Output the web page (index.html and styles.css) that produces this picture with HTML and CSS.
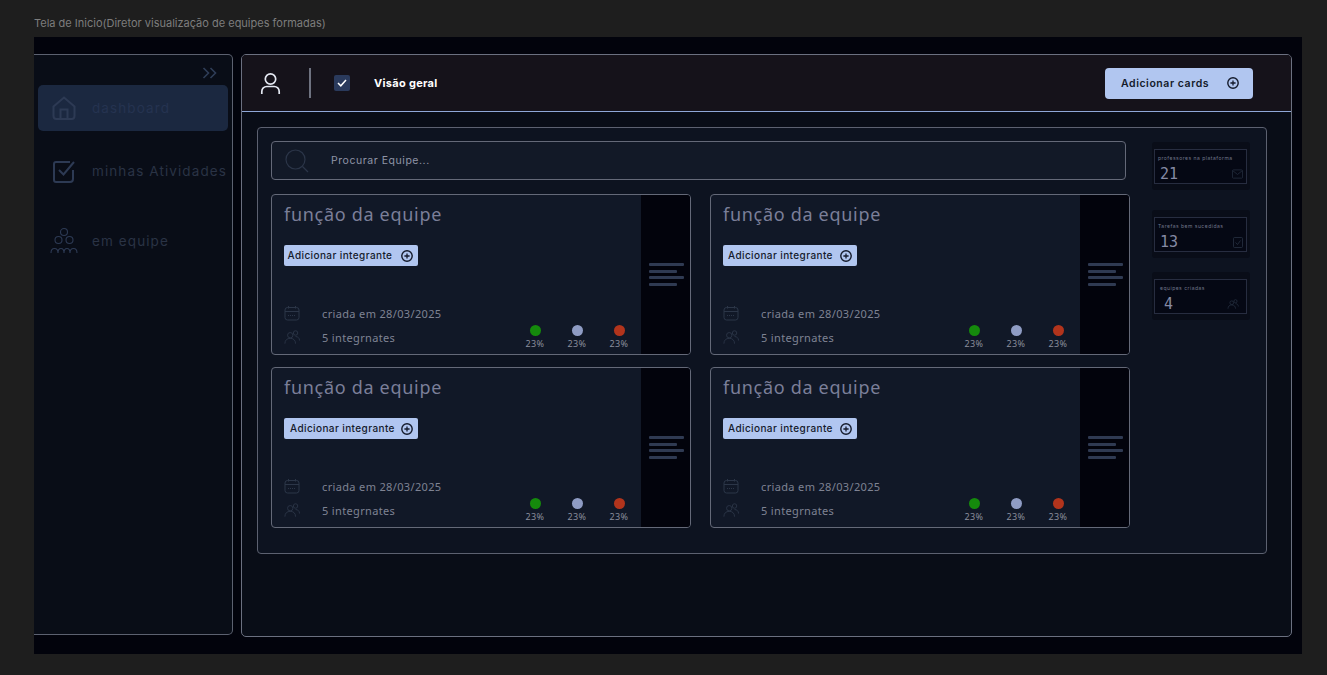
FILE: index.html
```html
<!DOCTYPE html>
<html lang="en">
<head>
    <meta charset="UTF-8">
    <meta name="viewport" content="width=device-width, initial-scale=1.0">
    <title>Tela de Inicio</title>
    <link rel="stylesheet" href="styles.css">
</head>
<body>
    <svg class="defs" width="0" height="0">
        <symbol id="i-plus" viewBox="0 0 14 14"><circle cx="7" cy="7" r="5.2" fill="none" stroke="currentColor" stroke-width="1.4"/><path d="M7 4.4v5.2M4.4 7h5.2" fill="none" stroke="currentColor" stroke-width="1.3"/></symbol>
        <symbol id="i-cal" viewBox="0 0 16 16"><rect x="1" y="2.5" width="14" height="12.5" rx="2.5" fill="none" stroke="currentColor"/><path d="M1 6.500h14M4.500 1v2.500M11.500 1v2.500" fill="none" stroke="currentColor"/><path d="M4 10.500h8" fill="none" stroke="currentColor" stroke-dasharray="1 1"/></symbol>
        <symbol id="i-people" viewBox="0 0 18 16"><circle cx="7" cy="6" r="3" fill="none" stroke="currentColor"/><circle cx="13" cy="3.5" r="2.5" fill="none" stroke="currentColor"/><path d="M1 15.500c0-4 2.500-6 6-6s6 2 6 6M13 7.500c2.500 0 4.500 1.500 4.500 4.500" fill="none" stroke="currentColor"/></symbol>
    </svg>
    <p class="frame-label">Tela de Inicio(Diretor visualização de equipes formadas)</p>
    <div class="frame">
        <aside class="sidebar">
            <div class="collapse">
                <svg width="16" height="12" viewBox="0 0 16 12"><path d="M1.500 1l5 5-5 5M8.500 1l5 5-5 5" fill="none" stroke="currentColor" stroke-width="1.600"/></svg>
            </div>
            <a class="nav-item active">
                <svg width="26" height="26" viewBox="0 0 26 26"><path d="M2.500 11.500 13 2.500l10.500 9V21a3 3 0 0 1-3 3h-15a3 3 0 0 1-3-3z" fill="none" stroke="currentColor" stroke-width="2"/><path d="M9.500 24V14.500h7V24" fill="none" stroke="currentColor" stroke-width="2"/></svg>
                <span class="dim">dashboard</span>
            </a>
            <a class="nav-item">
                <svg width="26" height="26" viewBox="0 0 26 26"><path d="M22 12v9a3 3 0 0 1-3 3H5a2 2 0 0 1-2-2V6a2 2 0 0 1 2-2h14" fill="none" stroke="currentColor" stroke-width="2"/><path d="M8 12l4.500 4.500L23 4" fill="none" stroke="currentColor" stroke-width="2"/></svg>
                <span>minhas Atividades</span>
            </a>
            <a class="nav-item">
                <svg width="28" height="28" viewBox="0 0 28 28"><g fill="none" stroke="currentColor" stroke-width="1.100"><circle cx="14" cy="5" r="3.500"/><circle cx="8.500" cy="13" r="3.500"/><circle cx="19.500" cy="13" r="3.500"/><path d="M1 26c0-6 7-6 7 0M8 26c0-6 6-6 6 0M14 26c0-6 6-6 6 0M20 26c0-6 7-6 7 0"/></g></svg>
                <span>em equipe</span>
            </a>
        </aside>
        <main class="main">
            <header class="topbar">
                <svg class="user" width="22" height="24" viewBox="0 0 22 24"><circle cx="10.500" cy="8" r="5.200" fill="none" stroke="#e4e8f2" stroke-width="1.700"/><path d="M1.800 23v-2.500a5 5 0 0 1 5-5h7.400a5 5 0 0 1 5 5V23" fill="none" stroke="#e4e8f2" stroke-width="1.700"/></svg>
                <span class="vline"></span>
                <span class="check"><svg width="10" height="8" viewBox="0 0 10 8"><path d="M1 4l2.800 2.800L9 1" fill="none" stroke="#fff" stroke-width="1.500"/></svg></span>
                <strong class="overview">Visão geral</strong>
                <button class="btn-cards">Adicionar cards <svg width="14" height="14"><use href="#i-plus"/></svg></button>
            </header>
            <section class="panel">
                <div class="content">
                    <div class="search">
                        <svg width="24" height="24" viewBox="0 0 24 24"><circle cx="10.500" cy="10.500" r="9.500" fill="none" stroke="currentColor" stroke-width="1.200"/><path d="M17.500 17.500 23 23" fill="none" stroke="currentColor" stroke-width="1.200"/></svg>
                        <span>Procurar Equipe...</span>
                    </div>
                    <div class="cards">
                        <article class="card">
                            <div class="card-body">
                                <h2>função da equipe</h2>
                                <button class="btn-add"><span>Adicionar integrante</span><svg width="14" height="14"><use href="#i-plus"/></svg></button>
                                <div class="card-foot">
                                    <div class="meta">
                                        <div class="meta-row"><svg width="16" height="16"><use href="#i-cal"/></svg><span>criada em 28/03/2025</span></div>
                                        <div class="meta-row"><svg width="18" height="16"><use href="#i-people"/></svg><span>5 integrnates</span></div>
                                    </div>
                                    <div class="rates">
                                        <div class="rate"><i class="dot green"></i>23%</div>
                                        <div class="rate"><i class="dot blue"></i>23%</div>
                                        <div class="rate"><i class="dot red"></i>23%</div>
                                    </div>
                                </div>
                            </div>
                            <div class="card-side"><b></b><b class="short"></b><b></b><b class="short"></b></div>
                        </article>
                        <article class="card">
                            <div class="card-body">
                                <h2>função da equipe</h2>
                                <button class="btn-add wide"><span>Adicionar integrante</span><svg width="14" height="14"><use href="#i-plus"/></svg></button>
                                <div class="card-foot">
                                    <div class="meta">
                                        <div class="meta-row"><svg width="16" height="16"><use href="#i-cal"/></svg><span>criada em 28/03/2025</span></div>
                                        <div class="meta-row"><svg width="18" height="16"><use href="#i-people"/></svg><span>5 integrnates</span></div>
                                    </div>
                                    <div class="rates">
                                        <div class="rate"><i class="dot green"></i>23%</div>
                                        <div class="rate"><i class="dot blue"></i>23%</div>
                                        <div class="rate"><i class="dot red"></i>23%</div>
                                    </div>
                                </div>
                            </div>
                            <div class="card-side"><b></b><b class="short"></b><b></b><b class="short"></b></div>
                        </article>
                        <article class="card">
                            <div class="card-body">
                                <h2>função da equipe</h2>
                                <button class="btn-add wider"><span>Adicionar integrante</span><svg width="14" height="14"><use href="#i-plus"/></svg></button>
                                <div class="card-foot">
                                    <div class="meta">
                                        <div class="meta-row"><svg width="16" height="16"><use href="#i-cal"/></svg><span>criada em 28/03/2025</span></div>
                                        <div class="meta-row"><svg width="18" height="16"><use href="#i-people"/></svg><span>5 integrnates</span></div>
                                    </div>
                                    <div class="rates">
                                        <div class="rate"><i class="dot green"></i>23%</div>
                                        <div class="rate"><i class="dot blue"></i>23%</div>
                                        <div class="rate"><i class="dot red"></i>23%</div>
                                    </div>
                                </div>
                            </div>
                            <div class="card-side"><b></b><b class="short"></b><b></b><b class="short"></b></div>
                        </article>
                        <article class="card">
                            <div class="card-body">
                                <h2>função da equipe</h2>
                                <button class="btn-add wide"><span>Adicionar integrante</span><svg width="14" height="14"><use href="#i-plus"/></svg></button>
                                <div class="card-foot">
                                    <div class="meta">
                                        <div class="meta-row"><svg width="16" height="16"><use href="#i-cal"/></svg><span>criada em 28/03/2025</span></div>
                                        <div class="meta-row"><svg width="18" height="16"><use href="#i-people"/></svg><span>5 integrnates</span></div>
                                    </div>
                                    <div class="rates">
                                        <div class="rate"><i class="dot green"></i>23%</div>
                                        <div class="rate"><i class="dot blue"></i>23%</div>
                                        <div class="rate"><i class="dot red"></i>23%</div>
                                    </div>
                                </div>
                            </div>
                            <div class="card-side"><b></b><b class="short"></b><b></b><b class="short"></b></div>
                        </article>
                    </div>
                </div>
                <div class="stats">
                    <div class="stat">
                        <div class="stat-inner">
                            <small>professores na plataforma</small>
                            <div class="stat-row"><span>21</span><svg width="11" height="10" viewBox="0 0 12 10"><rect x="0.500" y="0.500" width="11" height="9" rx="1" fill="none" stroke="currentColor" stroke-width="0.700"/><path d="M1 1.500l5 4 5-4" fill="none" stroke="currentColor" stroke-width="0.700"/></svg></div>
                        </div>
                    </div>
                    <div class="stat">
                        <div class="stat-inner">
                            <small>Tarefas bem sucedidas</small>
                            <div class="stat-row"><span>13</span><svg width="10" height="11" viewBox="0 0 10 11"><rect x="0.500" y="0.500" width="9" height="10" rx="1" fill="none" stroke="currentColor" stroke-width="0.700"/><path d="M2.500 5.500l2 2 3-4" fill="none" stroke="currentColor" stroke-width="0.700"/></svg></div>
                        </div>
                    </div>
                    <div class="stat">
                        <div class="stat-inner">
                            <small class="in">equipes criadas</small>
                            <div class="stat-row in"><span>4</span><svg width="12" height="10"><use href="#i-people"/></svg></div>
                        </div>
                    </div>
                </div>
            </section>
        </main>
    </div>
</body>
</html>
```

FILE: styles.css
```css
* { box-sizing: border-box; }
body { margin: 0; height: 675px; overflow: hidden; background: #1e1e1e; font-family: Inter, "Liberation Sans", sans-serif; }
.defs { position: absolute; }
.frame-label { margin: 0; padding: 17px 0 0 34px; height: 37px; font-size: 11px; line-height: 13px; color: #7d7d7d; }
.frame { margin-left: 34px; width: 1268px; height: 617px; padding-top: 17px; display: flex; gap: 8px; align-items: flex-start; background: #02030c; }

.sidebar { width: 199px; height: 581px; padding: 8px 4px 0; background: #090d17; border: 1px solid #5c6170; border-left: none; border-radius: 0 5px 5px 0; }
.collapse { height: 22px; padding-right: 10px; text-align: right; color: #2f3d57; }
.nav-item { display: flex; align-items: center; gap: 15px; height: 46px; padding-left: 13px; margin-bottom: 24px; font-size: 13.5px; letter-spacing: 1.1px; white-space: nowrap; color: #2a3345; border-radius: 5px; }
.nav-item svg { flex: none; color: #2d3a54; }
.nav-item span.dim { color: #253350; }
.nav-item.active { background: #1b2840; margin-bottom: 17px; }
.nav-item:last-child { padding-left: 12px; gap: 14px; }

.main { width: 1051px; height: 583px; background: #090d17; border: 1px solid #6b7080; border-radius: 5px; overflow: hidden; }
.topbar { display: flex; align-items: center; height: 57px; padding: 0 38px 0 18px; background: #15121a; border-bottom: 1px solid #8fa8d8; }
.vline { width: 2px; height: 30px; margin: 0 23px 0 27px; background: #6e7280; }
.check { display: flex; align-items: center; justify-content: center; width: 16px; height: 16px; border-radius: 2px; background: #2a3a5c; }
.overview { margin-left: 24px; font-size: 11px; font-weight: 700; letter-spacing: 0.3px; color: #fff; }
.btn-cards { display: flex; align-items: center; justify-content: space-between; margin-left: auto; width: 148px; height: 31px; padding: 0 13px 0 16px; border: none; border-radius: 4px; background: #b1c6f0; font: 600 10.500px Inter, sans-serif; letter-spacing: 0.55px; color: #141a2b; }

.panel { display: flex; width: 1010px; height: 427px; margin: 15px 0 0 15px; padding: 13px 0 0 13px; background: #0d1320; border: 1px solid #5c6170; border-radius: 4px; }
.content { width: 859px; }
.search { display: flex; align-items: center; gap: 22px; width: 855px; height: 39px; padding-left: 13px; background: #121927; border: 1px solid #646978; border-radius: 4px; font-size: 10.500px; letter-spacing: 0.55px; color: #8f94a6; }
.search svg { color: #2b3548; }
.cards { display: grid; grid-template-columns: 420px 420px; grid-auto-rows: 161px; column-gap: 19px; row-gap: 12px; margin-top: 14px; }
.card { display: flex; background: #111827; border: 1px solid #646978; border-radius: 4px; overflow: hidden; }
.card-body { display: flex; flex-direction: column; width: 369px; padding: 6px 12px 0; }
.card-body h2 { margin: 0 0 18px; font: 400 18px/26px "Noto Sans", sans-serif; letter-spacing: 0.7px; color: #7b7f99; }
.btn-add { display: flex; align-items: center; width: 134px; height: 21px; padding: 0 4px 0 3.500px; border: none; border-radius: 2px; background: #b1c6f0; font: 500 10px Inter, sans-serif; letter-spacing: 0.4px; color: #141a2b; }
.btn-add span { padding-bottom: 2px; }
.btn-add svg { margin-left: auto; }
.btn-add.wide { padding-left: 5px; }
.btn-add.wider { padding-left: 6px; }
.card-foot { display: flex; justify-content: space-between; margin-top: 35px; }
.meta-row { display: flex; align-items: center; gap: 22px; height: 24px; font: 400 11px "Noto Sans", sans-serif; letter-spacing: 0.35px; color: #7f8393; }
.meta-row svg { flex: none; width: 16px; color: #2c3648; }
.rates { display: flex; gap: 22px; margin-right: 0; padding-top: 24px; }
.rate { width: 20px; text-align: center; font: 400 9px "Noto Sans", sans-serif; letter-spacing: 0.4px; color: #8a8e9c; }
.dot { display: block; width: 11px; height: 11px; margin: 0 auto 1px; border-radius: 50%; }
.green { background: #158a0c; }
.blue { background: #8f9cc4; }
.red { background: #b2341c; }
.card-side { flex: 1; display: flex; flex-direction: column; gap: 3.500px; align-items: flex-start; padding: 68px 0 0 8px; background: #02030c; }
.card-side b { display: block; width: 35px; height: 3px; border-radius: 1px; background: #2f3a52; }
.card-side b.short { width: 28px; }

.stats { width: 98px; margin: 1px 0 0 22px; }
.stat { width: 98px; height: 48px; padding: 7px 3px 0 2px; margin-bottom: 20px; background: #090d18; border-radius: 3px; }
.stat:nth-child(2) { margin-bottom: 14px; }
.stat-inner { height: 35px; padding: 5px 3px 0; background: #050814; border: 1px solid #272d40; }
.stat-inner small { display: block; font-size: 5px; line-height: 6px; letter-spacing: 0.5px; white-space: nowrap; color: #71768a; }
.stat-row { display: flex; align-items: center; justify-content: space-between; padding: 5px 0 0 2px; font: 400 15px/16px "DejaVu Sans Mono", monospace; color: #858aa4; }
.stat-row svg { color: #2c3648; }
.stat-inner .in { padding-left: 2px; }
.stat-row.in { padding-left: 6px; padding-right: 4px; }
```
